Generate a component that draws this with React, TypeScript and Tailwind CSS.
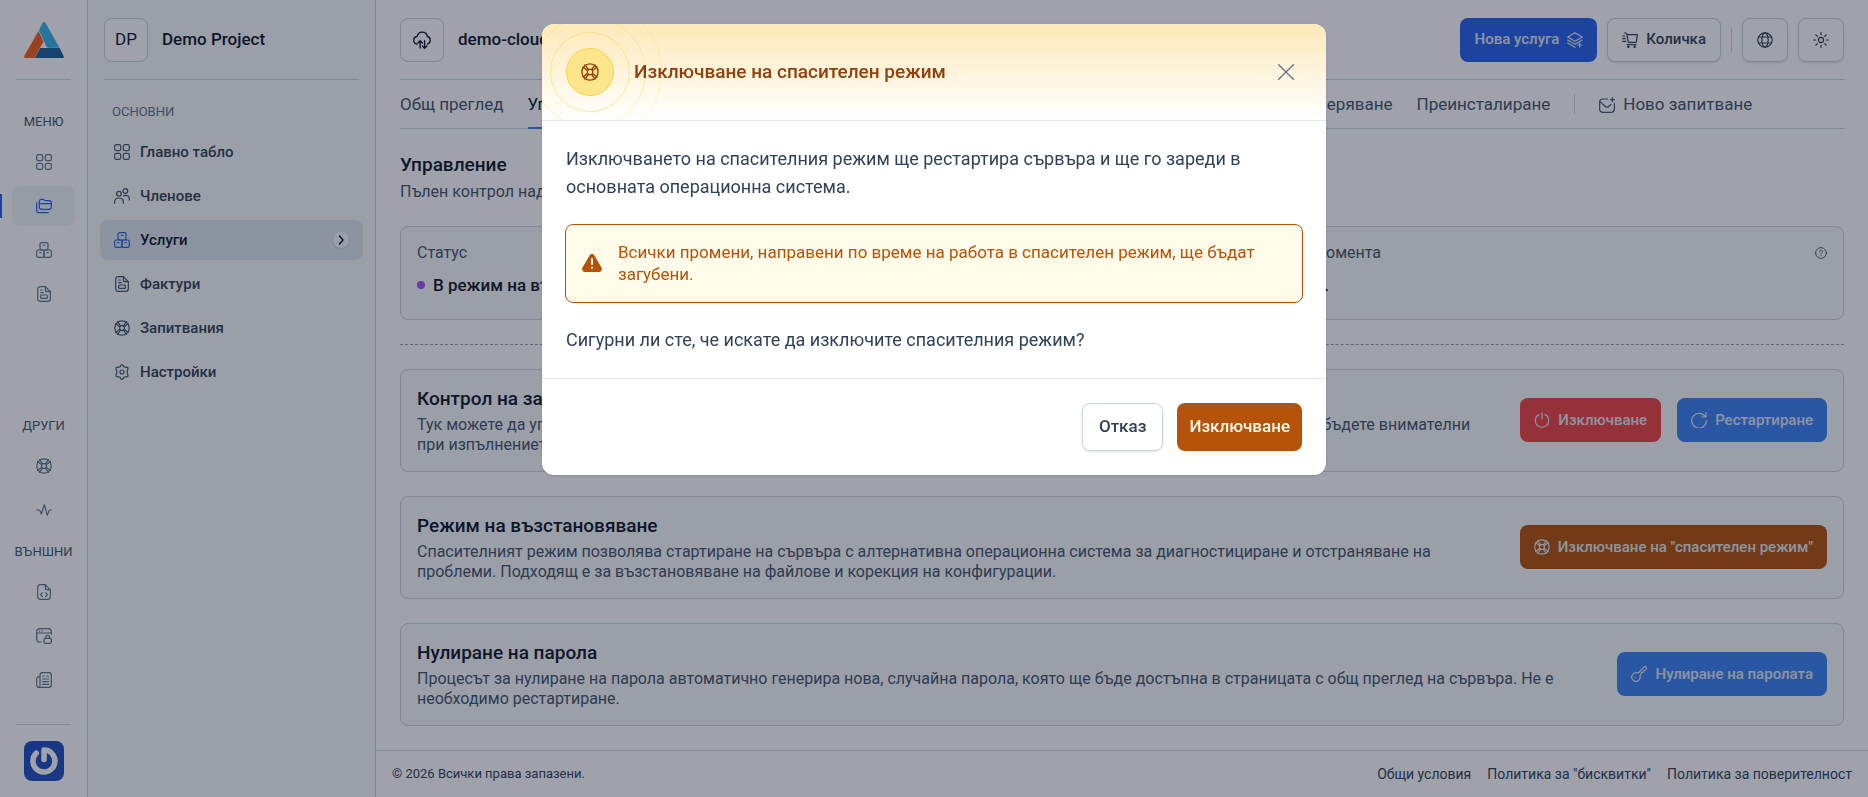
import type { ReactNode } from "react";

interface IconProps {
  className?: string;
  strokeWidth?: number;
  children?: ReactNode;
}

function Icon({ className = "size-4", strokeWidth = 1.8, children }: IconProps) {
  return (
    <svg
      viewBox="0 0 24 24"
      fill="none"
      stroke="currentColor"
      strokeWidth={strokeWidth}
      strokeLinecap="round"
      strokeLinejoin="round"
      aria-hidden="true"
      className={`shrink-0 ${className}`}
    >
      {children}
    </svg>
  );
}

const GridIcon = (p: IconProps) => (
  <Icon {...p}>
    <rect x="1" y="1" width="9" height="9" rx="2.5" />
    <rect x="14" y="1" width="9" height="9" rx="2.5" />
    <rect x="1" y="14" width="9" height="9" rx="2.5" />
    <rect x="14" y="14" width="9" height="9" rx="2.5" />
  </Icon>
);

const FoldersIcon = (p: IconProps) => (
  <Icon {...p}>
    <path d="M5 6.500C5 4 5.500 2 8 2h3l2.500 2H20c2.500 0 3 1.500 3 4v5.500c0 2.500-1 3.500-3.500 3.500h-11C6 17 5 16 5 13.500V6.500Z" />
    <path d="M5 8.500h18M1 7v10.500C1 20.500 2 22 5 22h13.500" />
  </Icon>
);

const BoxesIcon = (p: IconProps) => (
  <Icon {...p}>
    <rect x="6" y="1" width="12" height="11" rx="2.500" />
    <rect x="1" y="12" width="11" height="11" rx="2.500" />
    <rect x="12" y="12" width="11" height="11" rx="2.500" />
    <path d="M11 5h2M5.500 16h2M16.500 16h2" />
  </Icon>
);

const InvoiceIcon = (p: IconProps) => (
  <Icon {...p}>
    <path d="M2.500 5C2.500 2.500 4 1 6.500 1H14l7.500 7.500V19c0 2.500-1.500 4-4 4h-11c-2.500 0-4-1.500-4-4V5Z" />
    <path d="M14 1v4.500c0 2 1 3 3 3h4.500M7 6h2.500M7 10h4" />
    <rect x="7" y="13.500" width="10" height="5" rx="1" />
  </Icon>
);

const LifebuoyIcon = (p: IconProps) => (
  <Icon {...p}>
    <circle cx="12" cy="12" r="10.800" />
    <rect x="8.500" y="8.500" width="7" height="7" rx="2" />
    <path d="M2.500 5.200 8.800 10M5.200 2.500 10 8.800M18.800 2.500 14 8.800M21.500 5.200 15.200 10M2.500 18.800 8.800 14M5.200 21.500 10 15.200M18.800 21.500 14 15.200M21.500 18.800 15.200 14" />
  </Icon>
);

const PulseIcon = (p: IconProps) => (
  <Icon {...p}>
    <path d="M1 12h3c1.500 0 2 .5 2.500 2l1.500 4L12.500 4l4.500 16 2-6c.5-1.500 1-2 2-2h2" />
  </Icon>
);

const CodeFileIcon = (p: IconProps) => (
  <Icon {...p}>
    <path d="M2.500 5C2.500 2.500 4 1 6.500 1H14l7.500 7.500V19c0 2.500-1.500 4-4 4h-11c-2.500 0-4-1.500-4-4V5Z" />
    <path d="M14 1v4.500c0 2 1 3 3 3h4.500M9.500 13 7 16l2.500 3M14.500 13l2.500 3-2.500 3" />
  </Icon>
);

const BrowserLockIcon = (p: IconProps) => (
  <Icon {...p}>
    <path d="M8 21H6c-3.500 0-5-1.500-5-5V6c0-3.500 1.500-5 5-5h12c3.500 0 5 1.500 5 5v3M1 7.500h22M5 4.300h.5M9 4.300h.5" />
    <rect x="12" y="15.500" width="11" height="7.500" rx="2" />
    <path d="M14.500 15.500V14a3 3 0 0 1 6 0v1.500" />
  </Icon>
);

const NewsIcon = (p: IconProps) => (
  <Icon {...p}>
    <path d="M6 5c0-2.500 1-4 3.500-4h10C22 1 23 2.500 23 5v14c0 2.500-1 4-3.500 4H4.500C2 23 1 21.500 1 19v-8.500C1 8 2.500 7 6 7V5ZM6 7v13c0 2-.5 3-1.500 3" />
    <path d="M10 6h2.500M16 6h3M10 10.500h9M10 14.500h9M10 18.500h9" />
  </Icon>
);

const UsersIcon = (p: IconProps) => (
  <Icon {...p}>
    <circle cx="7.500" cy="8.500" r="3.500" />
    <circle cx="17" cy="4.500" r="3.500" />
    <path d="M1 23v-2c0-4 2.500-6 6.500-6s6.500 2 6.500 6v2M14.500 12c1-.8 2-1 3-1 3.500 0 5.500 2 5.500 5.500V18" />
  </Icon>
);

const GearIcon = (p: IconProps) => (
  <Icon {...p}>
    <path d="M12 1c1.800 0 2 2.800 3.500 3.600C17 5.400 19.500 3.700 20.700 5.500c1.200 1.900-.9 3.500-.9 6.500s2.100 4.600.9 6.500c-1.200 1.800-3.700.1-5.200.9C14 20.200 13.800 23 12 23s-2-2.800-3.500-3.600c-1.500-.8-4 .9-5.200-.9-1.200-1.900.9-3.500.9-6.500s-2.100-4.600-.9-6.500c1.200-1.800 3.700-.1 5.200-.9C10 3.800 10.200 1 12 1Z" />
    <circle cx="12" cy="12" r="3" />
  </Icon>
);

const CloudIcon = (p: IconProps) => (
  <Icon {...p}>
    <path d="M5.500 17.500C3 17 1 15 1 12.300c0-2.700 2-4.800 4.500-5C6.200 3.800 9 1.500 12.300 1.500c3.500 0 6.300 2.500 6.900 5.800 2.200.6 3.800 2.500 3.800 5 0 2.400-1.300 4.300-3.500 5" />
    <path d="M9.500 22.500v-9M6.500 16l3-3 3 3M15.500 13v9M12.500 20l3 3 3-3" />
  </Icon>
);

const LayersPlusIcon = (p: IconProps) => (
  <Icon {...p}>
    <path d="M12 1 23 7.500 12 14 1 7.500 12 1ZM1 12l11 6.500L23 12M1 16.500 12 23M19 16.500v6M16 19.500h6" />
  </Icon>
);

const CartIcon = (p: IconProps) => (
  <Icon {...p}>
    <path d="M3.500 1.500h2c1 0 1.500.5 1.700 1.500L9.500 15.500H20c1 0 1.500-.4 1.700-1.200L23 4H8M1 6h3M1 10h4M1 14h5M8 19h13" />
    <circle cx="9.500" cy="22.200" r="1" />
    <circle cx="19" cy="22.200" r="1" />
  </Icon>
);

const GlobeIcon = (p: IconProps) => (
  <Icon {...p}>
    <circle cx="12" cy="12" r="10.800" />
    <ellipse cx="12" cy="12" rx="4.800" ry="10.800" />
    <path d="M2.500 7.500h19M2.500 16.500h19" />
  </Icon>
);

const SunIcon = (p: IconProps) => (
  <Icon {...p}>
    <circle cx="12" cy="12" r="3.800" />
    <path d="M12 1v3M12 20v3M1 12h3M20 12h3M4.200 4.200l2.200 2.200M17.600 17.600l2.200 2.200M19.800 4.200l-2.200 2.200M6.400 17.600l-2.200 2.200" />
  </Icon>
);

const MailPlusIcon = (p: IconProps) => (
  <Icon {...p}>
    <path d="M13 3H6C2.500 3 1 4.500 1 8v10c0 3.500 1.500 5 5 5h12c3.500 0 5-1.500 5-5v-8M20 1v6M17 4h6M1.500 7l8 7.200c1.700 1.500 3.300 1.500 5 0L18 11" />
  </Icon>
);

const PowerIcon = (p: IconProps) => (
  <Icon {...p}>
    <path d="M12 1v9M7.500 4C4 5.500 2 9 2 13a10 10 0 0 0 20 0c0-4-2-7.500-5.500-9" />
  </Icon>
);

const RestartIcon = (p: IconProps) => (
  <Icon {...p}>
    <path d="M22.500 1v6.500H16M21.500 7.500A11 11 0 1 0 23 13" />
  </Icon>
);

const KeyIcon = (p: IconProps) => (
  <Icon {...p}>
    <path d="M11 10.500 19 2c1.200-1.300 2.700-1.300 3.500-.5.900.9.900 2.300 0 3.500L20.500 7l-2 .5-.5 2-2.500.5-.5 2.500L13.500 14c.8 3 .2 5.500-1.500 7.200-2.600 2.400-6.300 2.300-8.800 0-2.500-2.500-2.700-6.200-.3-8.700 2-2.200 5-2.900 8.100-2Z" />
    <path d="M6.500 17.500h.1" />
  </Icon>
);

const HelpIcon = (p: IconProps) => (
  <Icon {...p}>
    <circle cx="12" cy="12" r="10.800" />
    <path d="M9 9.500c0-1.800 1.300-3 3-3s3 1.200 3 2.800c0 2.200-3 2.400-3 4.700M12 17.300v.2" />
  </Icon>
);

function Logo() {
  return (
    <svg viewBox="0 0 40 36" className="h-9 w-10" aria-hidden="true">
      <path d="M18.500 1c.8-1.300 2.200-1.300 3 0L35.500 25.700H24.800c-1.300 0-2-.6-2.700-1.800L15 8.300 18.500 1Z" fill="#35b4e8" />
      <path d="M14.500 9l5 10.800L10.300 36H1.500C.1 36-.3 35 .3 33.800L14.500 9Z" fill="#f4601c" />
      <path d="M16.300 26H35.600l4 8c.7 1.200 0 2-1.200 2H10.700l5.600-10Z" fill="#1b629c" />
    </svg>
  );
}

function Avatar() {
  return (
    <svg viewBox="0 0 40 40" className="size-10 rounded-lg" aria-hidden="true">
      <rect width="40" height="40" fill="#1e4fc4" />
      <path d="M20 18.500V9a11 11 0 1 1-7.800 3.200" fill="none" stroke="#fff" strokeWidth="5.500" strokeLinecap="round" strokeLinejoin="round" />
    </svg>
  );
}

function RailLink({ label, active, children }: { label: string; active?: boolean; children: ReactNode }) {
  return (
    <a
      href="#"
      aria-label={label}
      className={`relative mx-3 flex h-10 items-center justify-center rounded-lg ${
        active ? "bg-slate-100 text-[#2563eb]" : "text-slate-500"
      }`}
    >
      {active && <span className="absolute top-2 -left-3 h-6 w-0.5 bg-[#2563eb]" />}
      {children}
    </a>
  );
}

function Rail() {
  return (
    <aside className="flex w-22 shrink-0 flex-col border-r border-slate-300 text-[13px] text-slate-600">
      <div className="mx-4 flex h-20 items-center justify-center border-b border-slate-300">
        <Logo />
      </div>
      <p className="mt-8 mb-2.5 text-center leading-5">МЕНЮ</p>
      <nav className="flex flex-col gap-1">
        <RailLink label="Главно табло"><GridIcon /></RailLink>
        <RailLink label="Проекти" active><FoldersIcon /></RailLink>
        <RailLink label="Услуги"><BoxesIcon /></RailLink>
        <RailLink label="Фактури"><InvoiceIcon /></RailLink>
      </nav>
      <div className="mt-auto">
        <p className="mb-2.5 text-center leading-5">ДРУГИ</p>
        <nav className="flex flex-col gap-1">
          <RailLink label="Запитвания"><LifebuoyIcon /></RailLink>
          <RailLink label="Състояние"><PulseIcon /></RailLink>
        </nav>
        <p className="mt-3 mb-2.5 text-center leading-5">ВЪНШНИ</p>
        <nav className="flex flex-col gap-1">
          <RailLink label="API"><CodeFileIcon /></RailLink>
          <RailLink label="Контролен панел"><BrowserLockIcon /></RailLink>
          <RailLink label="Новини"><NewsIcon /></RailLink>
        </nav>
        <div className="mx-4 mt-6 flex justify-center border-t border-slate-300 py-4">
          <Avatar />
        </div>
      </div>
    </aside>
  );
}

function SideLink({ label, active, children }: { label: string; active?: boolean; children: ReactNode }) {
  return (
    <a
      href="#"
      className={`flex h-10 items-center gap-2.5 rounded-lg px-3.5 text-[15px] font-medium ${
        active ? "bg-slate-200 text-slate-900" : "text-slate-700"
      }`}
    >
      <span className={active ? "text-[#2563eb]" : "text-slate-600"}>{children}</span>
      {label}
      {active && (
        <span className="ml-auto flex size-4 items-center justify-center rounded-full bg-slate-50 shadow-sm">
          <Icon className="size-3" strokeWidth={3}><path d="m9 4 7 8-7 8" /></Icon>
        </span>
      )}
    </a>
  );
}

function Sidebar() {
  return (
    <aside className="w-72 shrink-0 border-r border-slate-300 bg-slate-50">
      <div className="mx-4 flex h-20 items-center gap-3.5 border-b border-slate-300">
        <span className="flex size-11 items-center justify-center rounded-lg border border-slate-300 bg-white text-[17px] text-slate-900">DP</span>
        <span className="text-[17px] font-medium text-slate-900">Demo Project</span>
      </div>
      <p className="mt-[22px] mb-2.5 px-6 text-[13px] leading-5 text-slate-500">ОСНОВНИ</p>
      <nav className="flex flex-col gap-1 px-3">
        <SideLink label="Главно табло"><GridIcon /></SideLink>
        <SideLink label="Членове"><UsersIcon /></SideLink>
        <SideLink label="Услуги" active><BoxesIcon /></SideLink>
        <SideLink label="Фактури"><InvoiceIcon /></SideLink>
        <SideLink label="Запитвания"><LifebuoyIcon /></SideLink>
        <SideLink label="Настройки"><GearIcon /></SideLink>
      </nav>
    </aside>
  );
}

function TopBar() {
  return (
    <header className="mx-6 flex h-20 items-center border-b border-slate-300">
      <span className="flex size-11 items-center justify-center rounded-lg border border-slate-300 text-slate-900">
        <CloudIcon className="size-[18px]" />
      </span>
      <span className="ml-3.5 text-[17px] font-medium text-slate-900">demo-cloud</span>
      <div className="ml-auto flex items-center gap-2.5 text-[15px] font-medium text-slate-700">
        <button className="flex h-11 items-center gap-2 rounded-lg bg-[#2563eb] px-3.5 text-slate-200">
          Нова услуга
          <LayersPlusIcon />
        </button>
        <button className="flex h-11 items-center gap-2 rounded-lg border border-slate-300 px-3.5 shadow-sm">
          <CartIcon />
          Количка
        </button>
        <span className="h-6 w-px bg-slate-300" />
        <button aria-label="Език" className="flex h-11 items-center rounded-lg border border-slate-300 px-3.5 shadow-sm">
          <GlobeIcon />
        </button>
        <button aria-label="Тема" className="flex h-11 items-center rounded-lg border border-slate-300 px-3.5 shadow-sm">
          <SunIcon />
        </button>
      </div>
    </header>
  );
}

function Tabs() {
  return (
    <nav className="mx-6 flex h-[49px] items-stretch gap-6 border-b border-slate-300 text-[17px] whitespace-nowrap text-slate-600">
      <a href="#" className="flex items-center pt-0.5">Общ преглед</a>
      <div className="flex w-[865px] justify-between">
        <a href="#" className="-mb-px flex items-center border-b-2 border-[#3b82f6] pt-0.5 text-slate-900">Управление</a>
        <a href="#" className="flex items-center pt-0.5">Удостоверяване</a>
      </div>
      <a href="#" className="flex items-center pt-0.5">Преинсталиране</a>
      <span className="h-5 w-px self-center bg-slate-300" />
      <a href="#" className="flex items-center gap-2 pt-0.5">
        <MailPlusIcon />
        Ново запитване
      </a>
    </nav>
  );
}

interface ActionCardProps {
  title: string;
  lines: [string, string];
  children: ReactNode;
}

function ActionCard({ title, lines, children }: ActionCardProps) {
  return (
    <section className="flex items-center justify-between rounded-lg border border-slate-300 bg-slate-50 px-4 pt-[15px] pb-4">
      <div>
        <h2 className="text-[19px] leading-7 font-medium text-slate-900">{title}</h2>
        <p className="mt-0.5 text-base leading-5 whitespace-nowrap text-slate-600">
          {lines[0]}
          <br />
          {lines[1]}
        </p>
      </div>
      <div className="flex gap-4">{children}</div>
    </section>
  );
}

function ActionButton({ color, children }: { color: string; children: ReactNode }) {
  return (
    <button className={`flex h-11 items-center gap-2 rounded-lg px-3.5 text-[15px] font-medium whitespace-nowrap text-slate-200 ${color}`}>
      {children}
    </button>
  );
}

function Content() {
  return (
    <main className="flex-1 px-6 pb-6">
      <h1 className="mt-[22px] text-[19px] leading-7 font-medium text-slate-900">Управление</h1>
      <p className="mt-[3px] text-base leading-5 text-slate-600">Пълен контрол над сървъра</p>

      <div className="mt-6 grid grid-cols-2 gap-6">
        <div className="h-[94px] rounded-lg border border-slate-300 bg-slate-50 px-4 pt-4">
          <p className="text-base leading-5 text-slate-600">Статус</p>
          <p className="mt-2.5 flex items-center gap-2 text-[17px] leading-6 font-medium text-slate-900">
            <span className="size-2 rounded-full bg-[#a855f7]" />
            В режим на възстановяване
          </p>
        </div>
        <div className="h-[94px] rounded-lg border border-slate-300 bg-slate-50 px-4 pt-4">
          <div className="flex items-center justify-between text-slate-600">
            <p className="w-[230px] text-right text-base leading-5">Задачи в момента</p>
            <HelpIcon className="size-3" />
          </div>
          <p className="mt-2.5 w-[178px] text-right text-[17px] leading-6 font-medium text-slate-900">Няма.</p>
        </div>
      </div>

      <hr className="my-6 border-dashed border-slate-400" />

      <div className="flex flex-col gap-6">
        <ActionCard
          title="Контрол на захранването"
          lines={[
            "Тук можете да управлявате захранването на сървъра. Операциите може временно да прекъснат услугите, затова моля бъдете внимателни",
            "при изпълнението им.",
          ]}
        >
          <ActionButton color="bg-[#ef4444]"><PowerIcon />Изключване</ActionButton>
          <ActionButton color="bg-[#3b82f6]"><RestartIcon />Рестартиране</ActionButton>
        </ActionCard>
        <ActionCard
          title="Режим на възстановяване"
          lines={[
            "Спасителният режим позволява стартиране на сървъра с алтернативна операционна система за диагностициране и отстраняване на",
            "проблеми. Подходящ е за възстановяване на файлове и корекция на конфигурации.",
          ]}
        >
          <ActionButton color="bg-[#b45309]"><LifebuoyIcon />Изключване на "спасителен режим"</ActionButton>
        </ActionCard>
        <ActionCard
          title="Нулиране на парола"
          lines={[
            "Процесът за нулиране на парола автоматично генерира нова, случайна парола, която ще бъде достъпна в страницата с общ преглед на сървъра. Не е",
            "необходимо рестартиране.",
          ]}
        >
          <ActionButton color="bg-[#3b82f6]"><KeyIcon />Нулиране на паролата</ActionButton>
        </ActionCard>
      </div>
    </main>
  );
}

function Footer() {
  return (
    <footer className="flex h-[47px] items-center justify-between border-t border-slate-300 px-4 text-slate-700">
      <p className="text-[13px]">© 2026 Всички права запазени.</p>
      <nav className="flex gap-4 text-sm">
        <a href="#">Общи условия</a>
        <a href="#">Политика за "бисквитки"</a>
        <a href="#">Политика за поверителност</a>
      </nav>
    </footer>
  );
}

function RescueModal() {
  return (
    <div className="fixed inset-0 flex items-start justify-center bg-slate-900/40 pt-6">
      <div role="dialog" aria-modal="true" aria-labelledby="modal-title" className="w-full max-w-[784px] overflow-hidden rounded-xl bg-white shadow-sm">
        <div className="relative flex h-[97px] items-center overflow-hidden border-b border-slate-200 bg-linear-to-b from-[#fde9b8] to-white px-6">
          <div className="relative flex size-12 shrink-0 items-center justify-center rounded-full border border-[#fcd34d] bg-[#fde58a] text-[#92400e]">
            <span className="absolute -inset-4 -m-px rounded-full border border-[#fcd34d]/50" />
            <span className="absolute -inset-8 -m-px rounded-full border border-[#fcd34d]/35" />
            <span className="absolute -inset-12 -m-px rounded-full border border-[#fcd34d]/20" />
            <LifebuoyIcon className="size-[18px]" />
          </div>
          <h2 id="modal-title" className="relative ml-5 text-[19px] font-medium text-[#92400e]">Изключване на спасителен режим</h2>
          <button aria-label="Затваряне" className="ml-auto p-2 text-slate-500">
            <Icon strokeWidth={2}><path d="M1 1 23 23M23 1 1 23" /></Icon>
          </button>
        </div>
        <div className="px-6 py-6 text-lg leading-7 text-slate-700">
          <p>
            Изключването на спасителния режим ще рестартира сървъра и ще го зареди в
            <br />
            основната операционна система.
          </p>
          <div role="alert" className="-mx-px my-[23px] flex items-center gap-4 rounded-lg border border-[#b45309] bg-[#fffbeb] px-4 pt-4 pb-[17px] text-[17px] leading-[22px] text-[#b45309]">
            <svg viewBox="0 0 20 18" className="h-[18px] w-5 shrink-0" aria-hidden="true">
              <path d="M7.600 1.500C8.800-.4 11.200-.4 12.400 1.500l7.100 12C20.600 15.600 19.400 18 17 18H3C.6 18-.6 15.600.5 13.500l7.100-12Z" fill="currentColor" />
              <path d="M10 5v5M10 13.500v.2" stroke="#fffbeb" strokeWidth="2" strokeLinecap="round" />
            </svg>
            <p>
              Всички промени, направени по време на работа в спасителен режим, ще бъдат
              <br />
              загубени.
            </p>
          </div>
          <p>Сигурни ли сте, че искате да изключите спасителния режим?</p>
        </div>
        <div className="flex justify-end gap-3.5 border-t border-slate-200 p-6 text-[17px] font-medium">
          <button className="h-12 rounded-lg border border-slate-300 px-4 text-slate-700 shadow-sm">Отказ</button>
          <button className="h-12 rounded-lg bg-[#b45309] px-3 text-[#fffbeb]">Изключване</button>
        </div>
      </div>
    </div>
  );
}

export default function App() {
  return (
    <div lang="bg" className="flex min-h-screen bg-white font-['Roboto',sans-serif]">
      <Rail />
      <Sidebar />
      <div className="flex min-w-0 flex-1 flex-col">
        <TopBar />
        <Tabs />
        <Content />
        <Footer />
      </div>
      <RescueModal />
    </div>
  );
}
